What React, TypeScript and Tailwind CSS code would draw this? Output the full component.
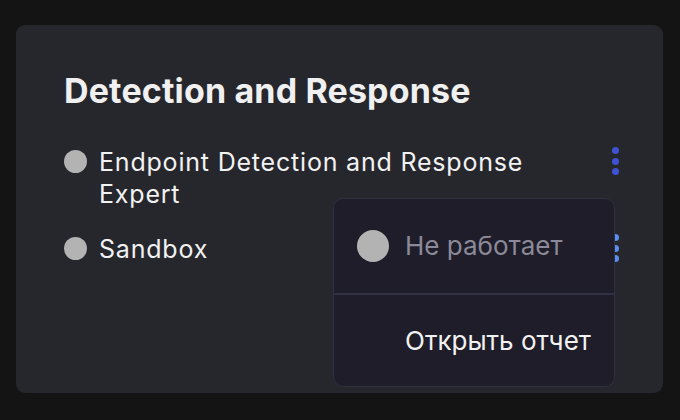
const font = { fontFamily: "Inter, 'Noto Sans', sans-serif" };

function Kebab({ color }: { color: string }) {
  return (
    <div className="flex flex-col items-center gap-[3.7px] w-[7px]">
      <span className={`block w-[7px] h-[7px] rounded-full ${color}`} />
      <span className={`block w-[7px] h-[7px] rounded-full ${color}`} />
      <span className={`block w-[7px] h-[7px] rounded-full ${color}`} />
    </div>
  );
}

function Item({ label, kebab }: { label: string; kebab: string }) {
  return (
    <div className="flex items-start">
      <span className="mt-[4px] w-[23px] h-[23px] shrink-0 rounded-full bg-[#b3b3b3]" />
      <p className="ml-[12px] w-[450px] text-[25px] leading-[32px] tracking-[0.8px] text-[#f2f2f2]">{label}</p>
      <div className="ml-auto mr-[44px] pt-[1px]">
        <Kebab color={kebab} />
      </div>
    </div>
  );
}

export default function App() {
  return (
    <div className="w-[680px] h-[420px] bg-[#141415] pl-[16px] pt-[25px]" style={font}>
      <div className="relative w-[647px] h-[368px] rounded-[9px] bg-[#26262d] pl-[48px] pt-[47px]">
        <h2 className="text-[34px] leading-[38px] font-bold text-[#f0f0f0] tracking-[0.15px]">
          Detection and Response
        </h2>
        <div className="mt-[36px] flex flex-col gap-[23px]">
          <Item label="Endpoint Detection and Response Expert" kebab="bg-[#3e52d3]" />
          <Item label="Sandbox" kebab="bg-[#5b8ef2]" />
        </div>

        <div className="absolute left-[317px] top-[173px] w-[282px] h-[189px] rounded-[10px] border border-[#2f3042] bg-[#1e1d29] flex flex-col overflow-hidden">
          <div className="h-[94px] flex items-center pl-[23px]">
            <span className="w-[32px] h-[32px] rounded-full bg-[#b3b3b3]" />
            <span className="ml-[16px] text-[26px] leading-[32px] text-[#8b8a98]">Не работает</span>
          </div>
          <div className="h-[2px] bg-[#2f3144]" />
          <div className="flex-1 flex items-center pl-[71px]">
            <span className="text-[26px] leading-[32px] text-[#f2f2f2]">Открыть отчет</span>
          </div>
        </div>
      </div>
    </div>
  );
}
